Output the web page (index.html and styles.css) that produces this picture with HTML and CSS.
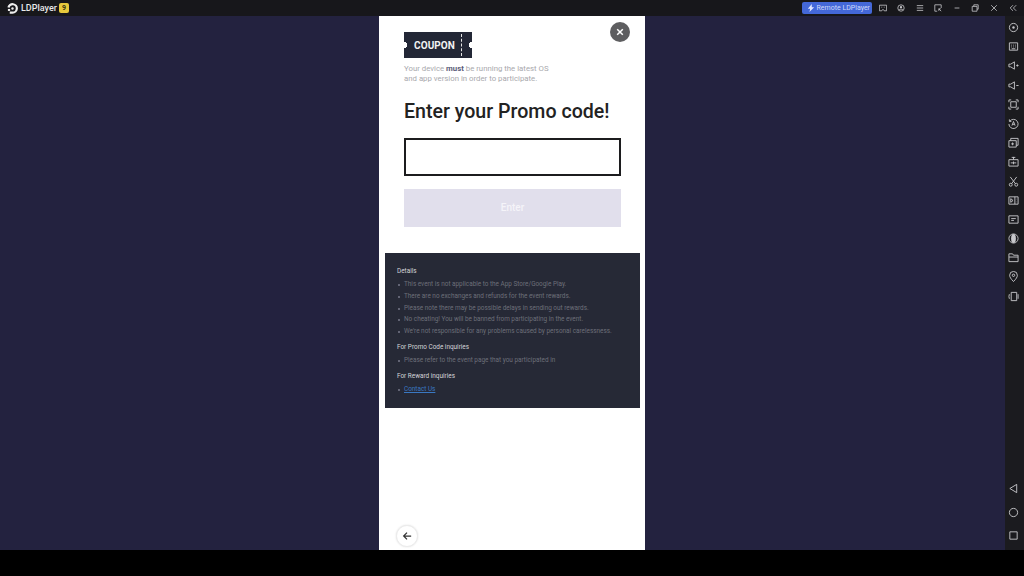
FILE: index.html
```html
<!DOCTYPE html>
<html lang="en">
<head>
  <meta charset="UTF-8" />
  <title>LDPlayer</title>
  <link rel="stylesheet" href="styles.css">
</head>
<body>
  <header class="titlebar">
    <div class="brand">
      <svg class="brand-logo" viewBox="0 0 12 12"><path d="M3 10.500H6A4.600 4.600 0 1 0 1.600 5" fill="none" stroke="#eee" stroke-width="2.400"/><circle cx="6" cy="6" r="1.300" fill="#eee"/><rect x="1" y="6.500" width="2.400" height="2.200" fill="#eee"/></svg>
      <span class="brand-name">LDPlayer</span>
      <span class="brand-badge">9</span>
    </div>
    <div class="title-actions">
      <div class="remote">
        <svg viewBox="0 0 10 10" class="remote-bolt"><path d="M6 0 1 6h3L3 10l6-6H6z" fill="#dfe6ff"/></svg>
        <span>Remote LDPlayer</span>
      </div>
      <svg class="tb-icon" viewBox="0 0 10 10"><path d="M.5 1.500h9v7H6.500L5.500 7h-1l-1 1.500h-3zM3 4h1M6 4h1" class="ln"/></svg>
      <svg class="tb-icon" viewBox="0 0 10 10"><circle cx="5" cy="5" r="4" class="ln"/><circle cx="5" cy="4" r="1.400" fill="#c8c8cc"/><path d="M2.500 7.500C3 6 7 6 7.500 7.500" class="ln"/></svg>
      <svg class="tb-icon" viewBox="0 0 10 10"><path d="M1 2h8M1 5h8M1 8h8" class="ln"/></svg>
      <svg class="tb-icon" viewBox="0 0 10 10"><path d="M4 9H1V1h8v4M6 6l3 3M6 6v2.500M6 6h2.500" class="ln"/></svg>
      <svg class="tb-icon" viewBox="0 0 10 10"><path d="M2 5h6" class="ln"/></svg>
      <svg class="tb-icon" viewBox="0 0 10 10"><path d="M1.500 3h6v6h-6zM3.500 3V1h5.500v5.500H7.500" class="ln"/></svg>
      <svg class="tb-icon" viewBox="0 0 10 10"><path d="M1.500 1.500l7 7M8.500 1.500l-7 7" class="ln"/></svg>
      <svg class="tb-icon tb-last" viewBox="0 0 10 10"><path d="M5 1.500 1.500 5 5 8.500M9 1.500 5.500 5 9 8.500" class="ln"/></svg>
    </div>
  </header>

  <div class="workspace">
    <main class="stage">
      <section class="phone">
        <button class="close-btn" type="button">
          <svg viewBox="0 0 10 10"><path d="M1.500 1.500l7 7M8.500 1.500l-7 7" fill="none" stroke="#fff" stroke-width="1.900"/></svg>
        </button>

        <div class="promo">
          <div class="ticket"><span class="ticket-label">COUPON</span></div>
          <p class="notice">Your device <strong>must</strong> be running the latest OS<br>and app version in order to participate.</p>
          <h1>Enter your Promo code!</h1>
          <div class="code-input"></div>
          <div class="enter-btn">Enter</div>
        </div>

        <div class="details">
          <h2>Details</h2>
          <ul>
            <li>This event is not applicable to the App Store/Google Play.</li>
            <li>There are no exchanges and refunds for the event rewards.</li>
            <li>Please note there may be possible delays in sending out rewards.</li>
            <li>No cheating! You will be banned from participating in the event.</li>
            <li>We're not responsible for any problems caused by personal carelessness.</li>
          </ul>
          <h2>For Promo Code inquiries</h2>
          <ul>
            <li>Please refer to the event page that you participated in</li>
          </ul>
          <h2>For Reward inquiries</h2>
          <ul>
            <li><a href="#">Contact Us</a></li>
          </ul>
        </div>

        <button class="back-btn" type="button">
          <svg viewBox="0 0 12 12"><path d="M11 6H2M6 2 2 6l4 4" fill="none" stroke="#333" stroke-width="1.500"/></svg>
        </button>
      </section>
    </main>

    <aside class="sidebar">
      <div class="side-top">
        <svg viewBox="0 0 12 12"><circle cx="6" cy="6" r="4.500" class="ln"/><circle cx="6" cy="6" r="1.300" fill="#c8c8cc"/></svg>
        <svg viewBox="0 0 12 12"><path d="M1.500 2h9v8h-9zM3.500 4.500h.8M5.600 4.500h.8M7.700 4.500h.8M3.500 6.500h.8M5.600 6.500h.8M7.700 6.500h.8M4 8.500h4" class="ln"/></svg>
        <svg viewBox="0 0 12 12"><path d="M1 4.500h2L7 2v8L3 7.500H1zM9 6h2.500M10.200 4.800v2.400" class="ln"/></svg>
        <svg viewBox="0 0 12 12"><path d="M1 4.500h2L7 2v8L3 7.500H1zM9 6h2.500" class="ln"/></svg>
        <svg viewBox="0 0 12 12"><path d="M1 3.500V1h2.500M8.500 1H11v2.500M11 8.500V11H8.500M3.500 11H1V8.500M3 3h6v6H3z" class="ln"/></svg>
        <svg viewBox="0 0 12 12"><path d="M2 3.500A5 5 0 1 1 1 6.500M1.500 1.500v2.200h2.200M4.300 8.300 6 3.800l1.700 4.500M4.900 6.900h2.200" class="ln"/></svg>
        <svg viewBox="0 0 12 12"><path d="M1 4h8v7H1zM3 4V1.500h8V9H9M5 6v3M3.500 7.500h3" class="ln"/></svg>
        <svg viewBox="0 0 12 12"><path d="M1 4h10v7H1zM6 1v3M4 1.500h4M3 7.500h6M6 6v3" class="ln"/></svg>
        <svg viewBox="0 0 12 12"><circle cx="3" cy="9.500" r="1.600" class="ln"/><circle cx="9" cy="9.500" r="1.600" class="ln"/><path d="M4 8.300 9.500 1M8 8.300 2.500 1" class="ln"/></svg>
        <svg viewBox="0 0 12 12"><path d="M1 2h10v8H1zM7.500 2v8M9.200 4.500h.3M9.200 7.500h.3M3 4l2.500 2L3 8z" class="ln"/></svg>
        <svg viewBox="0 0 12 12"><path d="M1 2h10v8H1zM3.500 5h5M3.500 7h3" class="ln"/></svg>
        <svg viewBox="0 0 12 12"><circle cx="6" cy="6" r="5" class="ln"/><ellipse cx="6" cy="6" rx="2.600" ry="5" fill="#c8c8cc"/></svg>
        <svg viewBox="0 0 12 12"><path d="M1 10.500V2h4l1 1.500h5v7zM1 5.500h10" class="ln"/></svg>
        <svg viewBox="0 0 12 12"><path d="M6 11.500C3 8.500 1.800 6.500 1.800 4.700a4.200 4.200 0 0 1 8.400 0c0 1.800-1.200 3.800-4.200 6.800z" class="ln"/><circle cx="6" cy="4.700" r="1.300" class="ln"/></svg>
        <svg viewBox="0 0 12 12"><path d="M3.500 1.500h6v9h-6zM1.500 3.500 1 6l.5 2.500M11 3.500v5" class="ln"/></svg>
      </div>
      <div class="side-nav">
        <svg viewBox="0 0 12 12"><path d="M9.500 1.500v9L2 6z" class="ln"/></svg>
        <svg viewBox="0 0 12 12"><circle cx="6" cy="6" r="4.500" class="ln"/></svg>
        <svg viewBox="0 0 12 12"><path d="M2 2h8v8H2z" class="ln"/></svg>
      </div>
    </aside>
  </div>

  <div class="bottom-strip"></div>
</body>
</html>
```

FILE: styles.css
```css
:root {
  --bar: #17171b;
  --side: #1b1b1f;
  --stage: #23223f;
  --panel: #262936;
  --ink: #222;
  --icon: #c8c8cc;
}

* {
  box-sizing: border-box;
  margin: 0;
  padding: 0;
}

html, body {
  width: 1024px;
  height: 576px;
  overflow: hidden;
  background: #000;
  font-family: Roboto, 'Liberation Sans', sans-serif;
}

.ln {
  fill: none;
  stroke: var(--icon);
  stroke-width: 1;
}

.titlebar {
  height: 16px;
  background: var(--bar);
  display: flex;
  align-items: center;
  justify-content: space-between;
}

.brand {
  display: flex;
  align-items: center;
  padding-left: 7px;
}

.brand-logo {
  width: 11px;
  height: 11px;
}

.brand-name {
  margin-left: 3px;
  font-size: 9px;
  font-weight: 500;
  color: #e8e8ea;
}

.brand-badge {
  margin-left: 2px;
  width: 10px;
  height: 10px;
  border-radius: 2px;
  background: #e7c93c;
  color: #33300f;
  font-size: 7px;
  font-weight: 700;
  line-height: 10px;
  text-align: center;
}

.title-actions {
  display: flex;
  align-items: center;
}

.remote {
  width: 70px;
  height: 12px;
  margin-right: 2px;
  padding-left: 5px;
  border-radius: 2px;
  background: #4468d8;
  display: flex;
  align-items: center;
  gap: 2px;
  color: #cfd8fb;
  font-size: 7px;
  white-space: nowrap;
  overflow: hidden;
}

.remote-bolt {
  width: 8px;
  height: 8px;
  flex: none;
}

.tb-icon {
  width: 8px;
  height: 8px;
  margin: 0 5.500px 0 5px;
  flex: none;
}

.tb-last {
  margin: 0 7px 0 6px;
}

.workspace {
  height: 534px;
  display: flex;
}

.stage {
  flex: 1;
  background: var(--stage);
  display: flex;
  justify-content: center;
  padding-left: 19px;
}

.phone {
  position: relative;
  width: 266px;
  height: 100%;
  background: #fff;
  padding: 16px 5px 0 6px;
}

.close-btn {
  position: absolute;
  top: 6px;
  right: 15px;
  width: 20px;
  height: 20px;
  border: none;
  border-radius: 50%;
  background: #5e5e60;
  display: flex;
  align-items: center;
  justify-content: center;
}

.close-btn svg {
  width: 8px;
  height: 8px;
}

.promo {
  padding: 0 19px;
}

.ticket {
  width: 68px;
  height: 26px;
  background:
    radial-gradient(circle at 0 50%, #fff 3px, transparent 3.500px),
    radial-gradient(circle at 100% 50%, #fff 3px, transparent 3.500px),
    #232736;
  display: flex;
  align-items: center;
  position: relative;
}

.ticket::after {
  content: "";
  position: absolute;
  top: 2px;
  bottom: 2px;
  left: 57px;
  border-left: 1px dashed #e6e6e6;
}

.ticket-label {
  margin-left: 10px;
  color: #f2f2f2;
  font-size: 10px;
  font-weight: 700;
  letter-spacing: 0.1px;
}

.notice {
  margin-top: 6px;
  color: #a9a9ad;
  font-size: 7.800px;
  line-height: 10px;
}

.notice strong {
  color: #5a5c78;
}

h1 {
  margin-top: 15px;
  color: var(--ink);
  font-size: 19.600px;
  font-weight: 500;
  line-height: 26px;
  white-space: nowrap;
}

.code-input {
  margin-top: 13px;
  width: 217px;
  height: 38px;
  border: 2.500px solid #1c1c1e;
}

.enter-btn {
  margin-top: 13px;
  width: 217px;
  height: 38px;
  background: #e1dfec;
  color: #f5f4f9;
  font-size: 10px;
  font-weight: 500;
  line-height: 38px;
  text-align: center;
}

.details {
  margin-top: 26px;
  width: 255px;
  height: 155px;
  padding: 13px 12px 0;
  background: var(--panel);
}

.details h2 {
  color: #d4d4d8;
  font-size: 6.400px;
  font-weight: 400;
  line-height: 11px;
}

.details ul {
  list-style: none;
  margin: 2px 0 4px;
}

.details li {
  position: relative;
  padding-left: 7px;
  color: #6d6f79;
  font-size: 6.400px;
  line-height: 11.800px;
  white-space: nowrap;
}

.details li::before {
  content: "";
  position: absolute;
  left: 1px;
  top: 5px;
  width: 2px;
  height: 2px;
  border-radius: 50%;
  background: #77798a;
}

.details a {
  color: #3a78c2;
}

.back-btn {
  position: absolute;
  left: 17px;
  bottom: 3px;
  width: 22px;
  height: 22px;
  border: 1px solid #ececec;
  border-radius: 50%;
  background: #fff;
  box-shadow: 0 0 2px rgba(0, 0, 0, 0.12);
  display: flex;
  align-items: center;
  justify-content: center;
}

.back-btn svg {
  width: 10px;
  height: 10px;
}

.sidebar {
  width: 19px;
  background: var(--side);
  display: flex;
  flex-direction: column;
  justify-content: space-between;
  align-items: center;
  padding: 6px 2px 9px 0;
}

.sidebar svg {
  width: 11px;
  height: 11px;
  display: block;
}

.side-top {
  display: flex;
  flex-direction: column;
  gap: 8.200px;
}

.side-nav {
  display: flex;
  flex-direction: column;
  gap: 12.500px;
}

.bottom-strip {
  height: 26px;
  background: #000;
}
```
